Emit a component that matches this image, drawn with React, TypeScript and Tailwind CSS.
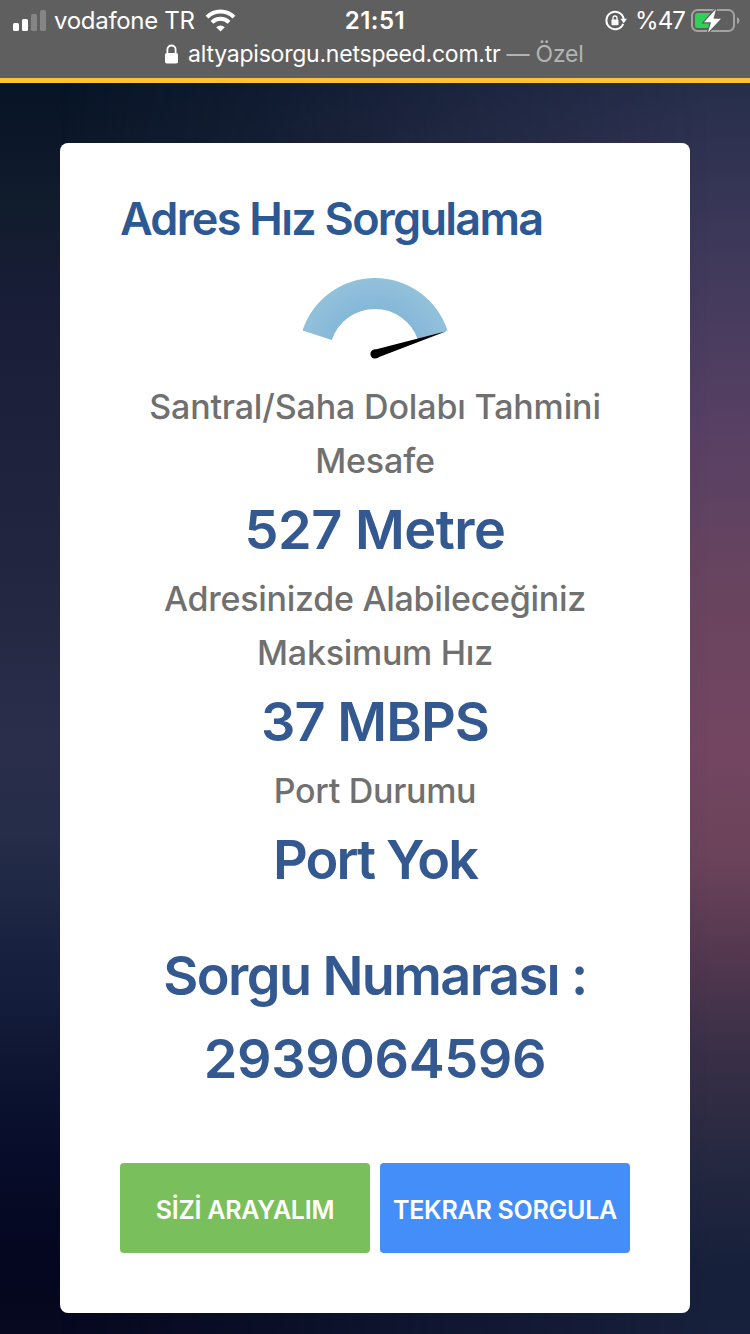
import React from "react";

function StatusBar() {
  return (
    <header className="h-[78px] shrink-0 bg-[#5f5f5f] font-['Inter',sans-serif] text-white">
      <div className="grid h-10 grid-cols-3 items-center">
        <div className="flex items-center pl-[13px]">
          <svg width="34" height="22" viewBox="0 0 34 22" className="shrink-0">
            <rect x="0" y="13" width="6" height="8" rx="1.6" fill="#fff" />
            <rect x="9" y="9" width="6" height="12" rx="1.6" fill="#fff" />
            <rect x="18" y="4" width="6" height="17" rx="1.6" fill="#858585" />
            <rect x="27" y="0" width="6" height="21" rx="1.6" fill="#858585" />
          </svg>
          <span className="ml-[7px] whitespace-nowrap text-[24px] leading-10 tracking-[-0.3px]">vodafone TR</span>
          <svg width="31" height="23" viewBox="0 0 31 23" className="ml-2.5 shrink-0" fill="none" stroke="#fff">
            <path d="M2 8.1A19.2 19.2 0 0 1 29 8.1" strokeWidth="4.1" />
            <path d="M7 13.3A12.1 12.1 0 0 1 24 13.3" strokeWidth="4" />
            <path d="M15.5 22.5L11.2 18.2A6.2 6.2 0 0 1 19.8 18.2Z" fill="#fff" stroke="none" />
          </svg>
        </div>
        <span className="pt-px text-center text-[24px] font-semibold leading-10 tracking-[0.5px]">21:51</span>
        <div className="flex items-center justify-end pr-[10px]">
          <svg width="22" height="22" viewBox="0 0 22 22" fill="none" className="mt-px">
            <path d="M18.2 13.8A8.7 8.7 0 1 1 18.7 9" stroke="#fff" strokeWidth="2" />
            <path d="M15.4 8.7H22L18.6 13.2Z" fill="#fff" />
            <rect x="6.5" y="9.5" width="7" height="5.8" rx="0.8" fill="#fff" />
            <path d="M8 10V8a2 2 0 0 1 4 0v2" stroke="#fff" strokeWidth="1.3" />
          </svg>
          <span className="ml-2 pt-px text-[24px] leading-10 tracking-[-0.9px]">%47</span>
          <svg width="49" height="24" viewBox="0 0 49 24" className="ml-1.5">
            <rect x="1" y="1" width="42" height="21" rx="5.5" fill="none" stroke="#a3a3a3" strokeWidth="2" />
            <path d="M46 8v7q2.5-1 2.5-3.5T46 8Z" fill="#a3a3a3" />
            <rect x="4" y="4" width="17" height="15" rx="2.5" fill="#30d158" />
            <path d="M25 0L13 13.2H20L17 23.5L30 9.8H22.5Z" fill="#fff" stroke="#5f5f5f" strokeWidth="2.4" paintOrder="stroke" />
          </svg>
        </div>
      </div>
      <div className="flex h-7 items-center pl-[165px] text-[23px] leading-7 tracking-[-0.22px]">
        <svg width="13" height="20" viewBox="0 0 13 20" className="shrink-0">
          <rect x="0" y="9" width="13" height="10.5" rx="1.8" fill="#fff" />
          <path d="M2.4 10V5.6a4.1 4.1 0 0 1 8.2 0V10" fill="none" stroke="#fff" strokeWidth="1.8" />
        </svg>
        <span className="ml-2.5 whitespace-nowrap">altyapisorgu.netspeed.com.tr</span>
        <span className="ml-1.5 whitespace-nowrap text-[#b4b4b4]">— Özel</span>
      </div>
    </header>
  );
}

function Gauge() {
  return (
    <svg width="146" height="84" viewBox="302 276 146 84" className="mx-auto block">
      <defs>
        <radialGradient id="arc" gradientUnits="userSpaceOnUse" cx="375" cy="354" r="76">
          <stop offset="0.5" stopColor="#82b5d8" />
          <stop offset="1" stopColor="#92c1da" />
        </radialGradient>
      </defs>
      <path d="M302.5 330.5A76.3 76.3 0 0 1 447.5 330.5L418 339.8A45.5 45.5 0 0 0 331.8 340Z" fill="url(#arc)" />
      <path d="M373.5 350L447 331L376.5 358Z" />
      <circle cx="375" cy="354" r="4.6" />
    </svg>
  );
}

const results = [
  { label: ["Santral/Saha Dolabı Tahmini", "Mesafe"], value: "527 Metre", labelTracking: "tracking-[-0.15px]", valueTracking: "tracking-[-0.5px]" },
  { label: ["Adresinizde Alabileceğiniz", "Maksimum Hız"], value: "37 MBPS", labelTracking: "tracking-[-0.27px]", valueTracking: "tracking-[-0.9px]" },
  { label: ["Port Durumu"], value: "Port Yok", labelTracking: "tracking-[-0.3px]", valueTracking: "tracking-[-1.9px]" },
];

export default function App() {
  return (
    <div className="flex h-[1334px] w-[750px] flex-col overflow-hidden font-['Inter',sans-serif]">
      <StatusBar />
      <main className="relative flex-1 border-t-[5px] border-[#ffc233] bg-[linear-gradient(180deg,#071426_0%,#111c2d_10%,#191d38_18%,#222640_40%,#2b2e4b_52%,#252d48_60%,#17213f_70%,#070d2a_85%,#05061f_95%,#060920_100%)] px-[60px] pt-[60px]">
        <div className="absolute inset-0 bg-[linear-gradient(180deg,#262e4c_0%,#413a5b_15%,#584064_28%,#68445f_40%,#734561_53%,#6b435a_62%,#52374f_70%,#3a3047_77%,#232740_87%,#16203a_95%,#17203c_100%)] [mask-image:linear-gradient(90deg,transparent_8%,rgba(0,0,0,0.25)_35%,rgba(0,0,0,0.62)_60%,black_95%)]" />
        <section className="relative h-[1170px] rounded-lg bg-white px-[60px] pt-[46px]">
          <h1 className="whitespace-nowrap text-[45px] font-semibold leading-[60px] tracking-[-1.72px] text-[#2c5994]">Adres Hız Sorgulama</h1>
          <div className="pt-[27px]"><Gauge /></div>
          <div className="pt-5 text-center">
            {results.map((r) => (
              <div key={r.value}>
                <p className={`text-[34px] font-medium leading-[54px] text-[#707070] ${r.labelTracking}`}>
                  {r.label.map((l) => <span key={l} className="block whitespace-nowrap">{l}</span>)}
                </p>
                <p className={`text-[54px] font-semibold leading-[84px] text-[#345990] ${r.valueTracking}`}>{r.value}</p>
              </div>
            ))}
            <p className="mt-8 text-[54px] font-semibold leading-[83px] text-[#345990]">
              <span className="block whitespace-nowrap tracking-[-1.6px]">Sorgu Numarası :</span>
              <span className="block whitespace-nowrap tracking-[-0.4px]">2939064596</span>
            </p>
          </div>
          <div className="mt-[63px] grid grid-cols-2 gap-2.5 text-[25px] font-semibold tracking-[-0.25px] text-white">
            <button className="h-[90px] whitespace-nowrap rounded bg-[#79bf5b] pt-1.5">SİZİ ARAYALIM</button>
            <button className="h-[90px] whitespace-nowrap rounded bg-[#448ef9] pt-1.5">TEKRAR SORGULA</button>
          </div>
        </section>
      </main>
    </div>
  );
}
